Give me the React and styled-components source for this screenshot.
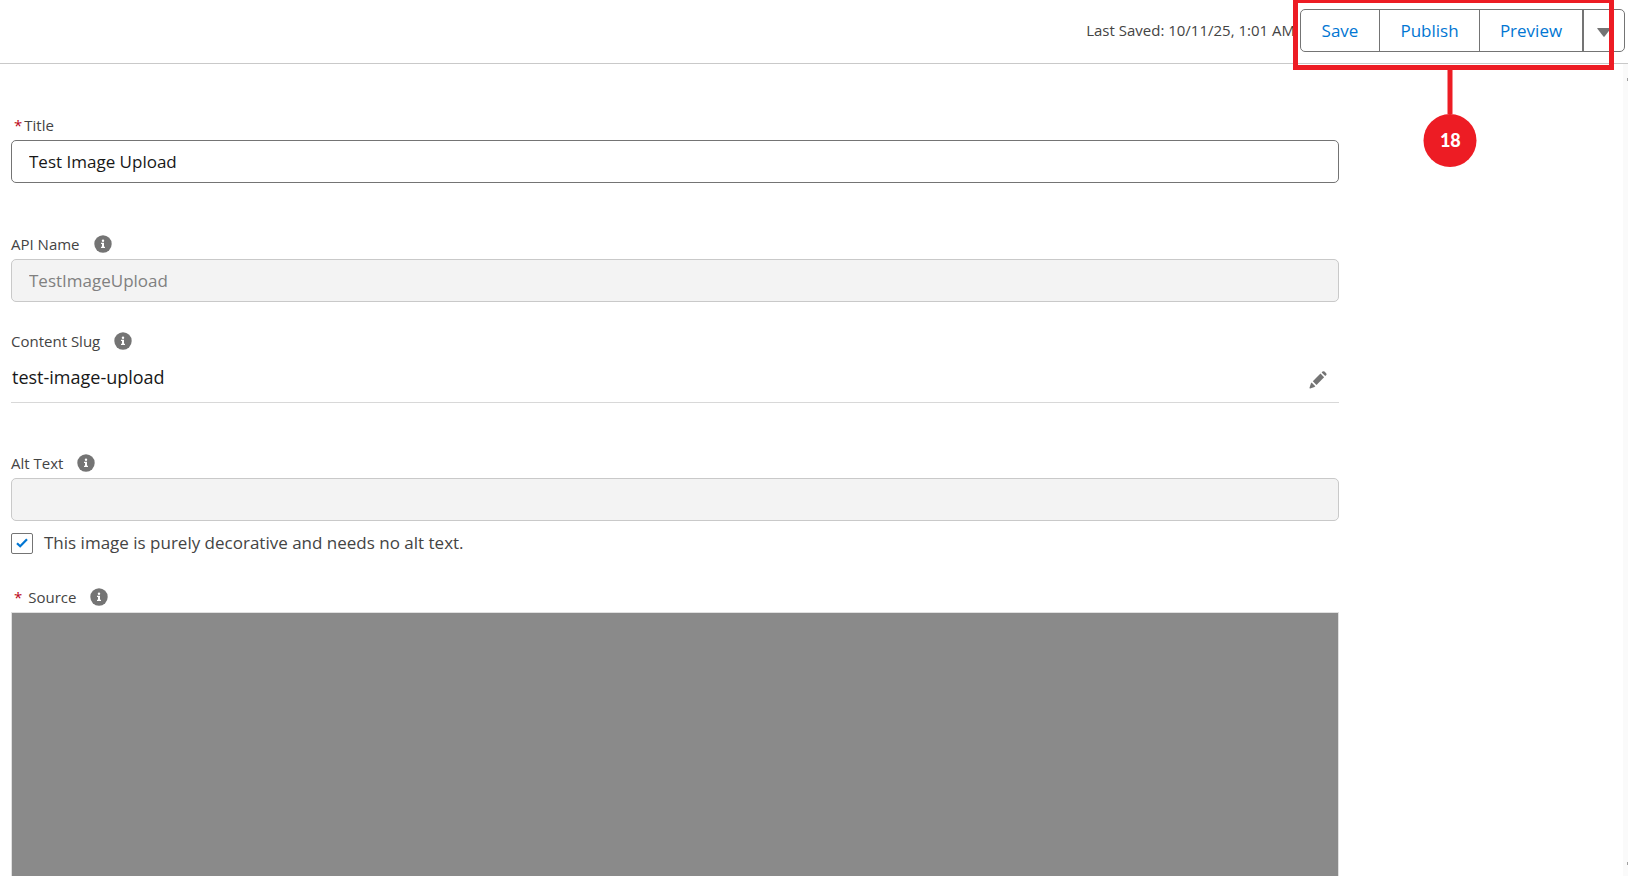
import React, { useState } from 'react';
import styled, { createGlobalStyle } from 'styled-components';

const GlobalStyle = createGlobalStyle`
  *,
  *::before,
  *::after {
    box-sizing: border-box;
  }

  body {
    margin: 0;
    background: #fff;
    color: #181818;
    font-family: 'Open Sans', 'Noto Sans', sans-serif;
    font-size: 17px;
  }

  button,
  input {
    font: inherit;
  }
`;

const Page = styled.div`
  display: flex;
  flex-direction: column;
  min-height: 100vh;
  overflow: hidden;
`;

const Header = styled.header`
  display: flex;
  justify-content: flex-end;
  align-items: flex-start;
  gap: 5px;
  padding: 9px 3px 11px;
  border-bottom: 1px solid #c9c9c9;
`;

const LastSaved = styled.span`
  color: #444;
  font-size: 15px;
  line-height: 43px;
  white-space: nowrap;
`;

const Actions = styled.div`
  position: relative;
`;

const ButtonGroup = styled.div`
  display: flex;
  height: 43px;
  border: 1px solid #747474;
  border-radius: 5px;
  background: #fff;
`;

const ActionButton = styled.button`
  width: ${({ $width }) => $width}px;
  padding: 0;
  border: 0;
  border-right: 1px solid #747474;
  background: transparent;
  color: #0176d3;
  cursor: pointer;
`;

const MenuButton = styled.button`
  display: flex;
  justify-content: center;
  align-items: center;
  width: 41px;
  padding: 3px 0 0;
  border: 0;
  border-left: 1px solid #747474;
  background: transparent;
  cursor: pointer;
`;

const Callout = styled.div`
  position: absolute;
  top: -11px;
  right: 11px;
  bottom: -18px;
  left: -7px;
  border: 5px solid #ed1c24;
  pointer-events: none;
`;

const CalloutPin = styled.div`
  position: absolute;
  top: 100%;
  left: 49%;
  display: flex;
  flex-direction: column;
  align-items: center;
  transform: translateX(-50%);
  padding-top: 5px;

  &::before {
    content: '';
    width: 5px;
    height: 44px;
    background: #ed1c24;
  }
`;

const CalloutNumber = styled.span`
  width: 53px;
  height: 53px;
  border-radius: 50%;
  background: #ed1c24;
  color: #fff;
  font-family: Lato, sans-serif;
  font-size: 18px;
  font-weight: 900;
  line-height: 53px;
  text-align: center;
`;

const Body = styled.div`
  display: flex;
  flex: 1;
`;

const Form = styled.form`
  display: flex;
  flex: 1;
  flex-direction: column;
  padding: 48px 284px 0 11px;
`;

const ScrollTrack = styled.div`
  display: flex;
  flex-direction: column;
  justify-content: space-between;
  align-items: flex-end;
  width: 5px;
  padding: 14px 0 11px;
  background: #fafafa;
`;

const ScrollTick = styled.span`
  width: 1px;
  height: 3px;
  background: #a0a0a0;
`;

const Field = styled.div`
  display: flex;
  flex: ${({ $grow }) => ($grow ? 1 : 'none')};
  flex-direction: column;
  margin-bottom: ${({ $gap = 0 }) => $gap}px;
`;

const LabelRow = styled.div`
  display: flex;
  align-items: center;
  gap: 14px;
  height: 28px;
  padding-bottom: 2px;
  color: #444;
  font-size: 15px;
`;

const Required = styled.abbr`
  margin: 0 ${({ $space }) => $space}px 0 3px;
  color: #ba0517;
  text-decoration: none;
`;

const InfoButton = styled.button`
  display: flex;
  padding: 0;
  border: 0;
  background: transparent;
  cursor: pointer;
`;

const TextInput = styled.input`
  width: 100%;
  height: 43px;
  padding: 0 17px 1px;
  border: 1px solid #747474;
  border-radius: 5px;
  background: #fff;
  color: #181818;

  &:disabled {
    border-color: #c9c9c9;
    background: #f3f3f3;
    color: #808080;
  }
`;

const SlugRow = styled.div`
  display: flex;
  justify-content: space-between;
  align-items: center;
  padding: 0 12px 4px 1px;
  border-bottom: 1px solid #d8d8d8;
  font-size: 18px;
  line-height: 42px;
`;

const EditButton = styled.button`
  display: flex;
  padding: 6px 0 0;
  border: 0;
  background: transparent;
  cursor: pointer;
`;

const CheckRow = styled.label`
  display: flex;
  align-items: center;
  gap: 11px;
  margin-top: 11px;
  color: #444;
  line-height: 22px;
`;

const CheckHolder = styled.span`
  display: grid;

  > * {
    grid-area: 1 / 1;
    place-self: center;
  }

  svg {
    pointer-events: none;
  }
`;

const Checkbox = styled.input`
  appearance: none;
  width: 22px;
  height: 21px;
  margin: 0;
  border: 1px solid #747474;
  border-radius: 2px;
  background: #fff;
`;

const SourcePreview = styled.div`
  flex: 1;
  min-height: 264px;
  border: 1px solid #e0e0e0;
  border-bottom: 0;
  background: #8a8a8a;
`;

const InfoIcon = () => (
  <svg width="18" height="18" viewBox="0 0 18 18" aria-hidden="true">
    <circle cx="9" cy="9" r="8.7" fill="#747474" />
    <circle cx="9" cy="5.7" r="1.2" fill="#fff" />
    <path d="M7 7.7h3v4h1v1.2H7v-1.2h1V8.9H7z" fill="#fff" />
  </svg>
);

const PencilIcon = () => (
  <svg width="18" height="18" viewBox="0 0 18 18" fill="#747474" aria-hidden="true">
    <path d="M12.6 1.5l.9-.9q1-.9 2 0l1.6 1.6q.9 1 0 2l-.9.9z" />
    <path d="M11.5 2.6l3.6 3.6-7.6 7.7-3.7-3.6z" />
    <path d="M2.6 11.6l3.7 3.6-.8.7-4.3 1.6q-.8.1-.7-.7l1.4-4.4z" />
  </svg>
);

const CaretIcon = () => (
  <svg width="14" height="9" viewBox="0 0 14 9" aria-hidden="true">
    <path d="M.6 0h12.8q.6.2.2.8L7.6 8.4q-.6.5-1.2 0L.4.8Q0 .2.6 0z" fill="#747474" />
  </svg>
);

const CheckIcon = () => (
  <svg width="12" height="10" viewBox="0 0 12 10" aria-hidden="true">
    <path d="M1 5.2l3.2 3.1L11 1.2" fill="none" stroke="#0176d3" strokeWidth="2.2" />
  </svg>
);

const Info = ({ about }) => (
  <InfoButton type="button" aria-label={`Help: ${about}`}>
    <InfoIcon />
  </InfoButton>
);

const actions = [
  { label: 'Save', width: 79 },
  { label: 'Publish', width: 100 },
  { label: 'Preview', width: 103 },
];

const App = () => {
  const [title, setTitle] = useState('Test Image Upload');
  const [decorative, setDecorative] = useState(true);

  return (
    <Page>
      <GlobalStyle />
      <Header>
        <LastSaved>Last Saved: 10/11/25, 1:01 AM</LastSaved>
        <Actions>
          <ButtonGroup>
            {actions.map(({ label, width }) => (
              <ActionButton key={label} type="button" $width={width}>
                {label}
              </ActionButton>
            ))}
            <MenuButton type="button" aria-label="More actions">
              <CaretIcon />
            </MenuButton>
          </ButtonGroup>
          <Callout>
            <CalloutPin>
              <CalloutNumber>18</CalloutNumber>
            </CalloutPin>
          </Callout>
        </Actions>
      </Header>
      <Body>
        <Form>
          <Field $gap={48}>
            <LabelRow as="label" htmlFor="title">
              <span>
                <Required title="required" $space={2}>*</Required>
                Title
              </span>
            </LabelRow>
            <TextInput id="title" value={title} onChange={(e) => setTitle(e.target.value)} />
          </Field>
          <Field $gap={26}>
            <LabelRow>
              <label htmlFor="api-name">API Name</label>
              <Info about="API Name" />
            </LabelRow>
            <TextInput id="api-name" defaultValue="TestImageUpload" disabled />
          </Field>
          <Field $gap={47}>
            <LabelRow>
              <span>Content Slug</span>
              <Info about="Content Slug" />
            </LabelRow>
            <SlugRow>
              <span>test-image-upload</span>
              <EditButton type="button" aria-label="Edit Content Slug">
                <PencilIcon />
              </EditButton>
            </SlugRow>
          </Field>
          <Field $gap={30}>
            <LabelRow>
              <label htmlFor="alt-text">Alt Text</label>
              <Info about="Alt Text" />
            </LabelRow>
            <TextInput id="alt-text" disabled={decorative} />
            <CheckRow>
              <CheckHolder>
                <Checkbox
                  type="checkbox"
                  checked={decorative}
                  onChange={(e) => setDecorative(e.target.checked)}
                />
                {decorative && <CheckIcon />}
              </CheckHolder>
              This image is purely decorative and needs no alt text.
            </CheckRow>
          </Field>
          <Field $grow>
            <LabelRow>
              <span>
                <Required title="required" $space={6}>*</Required>
                Source
              </span>
              <Info about="Source" />
            </LabelRow>
            <SourcePreview />
          </Field>
        </Form>
        <ScrollTrack>
          <ScrollTick />
          <ScrollTick />
        </ScrollTrack>
      </Body>
    </Page>
  );
};

export default App;
